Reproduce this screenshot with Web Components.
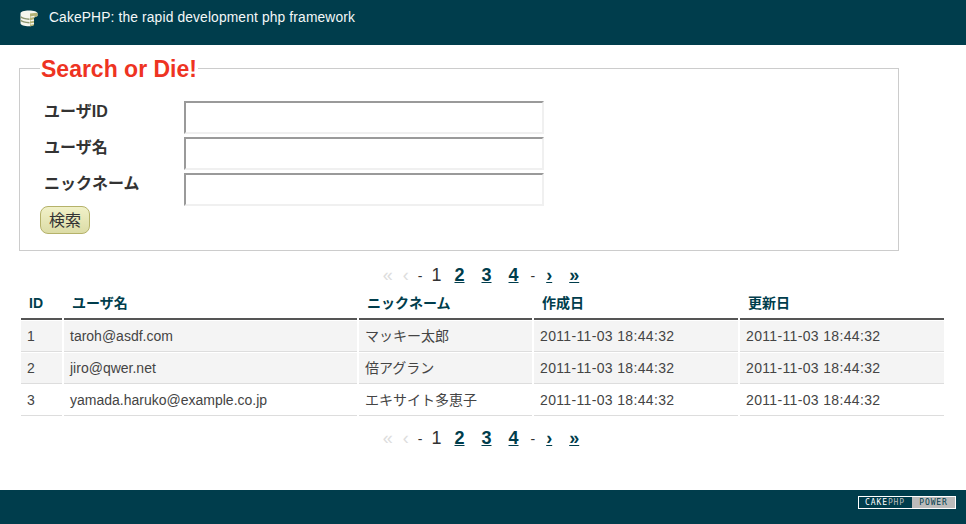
<!DOCTYPE html>
<html lang="ja">
<head>
<meta charset="utf-8">
<title>CakePHP</title>
<style>
  html, body { margin: 0; padding: 0; background: #fff; }
  body { font-family: "Liberation Sans", "Noto Sans CJK JP", sans-serif; font-size: 14px; color: #333; }
</style>
</head>
<body>
<cake-page>
  <cake-header slot="header">CakePHP: the rapid development php framework</cake-header>
  <search-box>Search or Die!</search-box>
  <pager-links></pager-links>
  <user-table></user-table>
  <pager-links class="bottom"></pager-links>
  <cake-footer slot="footer"></cake-footer>
</cake-page>

<script>
  /////////////////////////////////////////////////////////
  // Page frame: header, content, footer
  /////////////////////////////////////////////////////////
  class CakePage extends HTMLElement {
    constructor() {
      super();
      this.attachShadow({ mode: 'open' });
      this.shadowRoot.innerHTML = `
        <style>
          :host { display: flex; flex-direction: column; height: 524px; overflow: hidden; }
          main { flex: 1; padding: 23px 21px 0 19px; display: flex; flex-direction: column; }
        </style>
        <slot name="header"></slot>
        <main><slot></slot></main>
        <slot name="footer"></slot>
      `;
    }
  }
  customElements.define('cake-page', CakePage);

  class CakeHeader extends HTMLElement {
    constructor() {
      super();
      this.attachShadow({ mode: 'open' });
      this.shadowRoot.innerHTML = `
        <style>
          :host { display: flex; align-items: flex-start; gap: 11px; height: 45px; box-sizing: border-box;
            padding: 9px 0 0 20px; background: #003d4c; color: #f4f8f8; font-size: 13.8px; line-height: 17px; }
          svg { display: block; margin-top: 1px; }
          span { letter-spacing: 0.14px; }
        </style>
        <svg width="18" height="17" viewBox="0 0 18 17">
          <path d="M0.500 3.500C0.500 1.600 4 .5 9 .5s8.500 1.100 8.500 3v2.500L14 7.500v7.300c-1.300.9-3 1.500-5 1.500-4.500 0-8.500-1.200-8.500-3z" fill="#f6f6ee"/>
          <path d="M10 3.600L17.500 2.800V6L14 7.800V15.200C12.800 15.900 11.500 16.200 10 16.300z" fill="#b4b274"/>
          <path d="M10.500 7.200L14.500 6.400M10.500 10.800L14 10M10.500 14L14 13.300" stroke="#f6f6ee" stroke-width="1.300" fill="none"/>
          <path d="M.5 6.800C2 8.300 5 9 9.500 9.200M.5 10.300C2 11.800 5 12.500 9.500 12.700" stroke="#8d9670" stroke-width="1.500" fill="none"/>
        </svg>
        <span><slot></slot></span>
      `;
    }
  }
  customElements.define('cake-header', CakeHeader);

  /////////////////////////////////////////////////////////
  // One label + input row of the search form
  /////////////////////////////////////////////////////////
  class FormRow extends HTMLElement {
    constructor() {
      super();
      this.attachShadow({ mode: 'open' });
      this.shadowRoot.innerHTML = `
        <style>
          :host { display: flex; height: 36px; }
          label { width: 140px; padding-left: 4px;
            font-size: 16px; line-height: 22px; font-weight: bold; color: #333; }
          .box { width: 360px; height: 33px; box-sizing: border-box; background: #fff;
            border: 2px solid #f0f0f0; border-top-color: #9a9a9a; border-left-color: #9a9a9a; }
        </style>
        <label><slot></slot></label>
        <div class="box" role="textbox"></div>
      `;
    }
  }
  customElements.define('form-row', FormRow);

  class SearchBox extends HTMLElement {
    constructor() {
      super();
      this.attachShadow({ mode: 'open' });
      this.shadowRoot.innerHTML = `
        <style>
          :host { display: block; height: 183px; box-sizing: border-box; border: 1px solid #ccc;
            position: relative; width: 880px; }
          h2 { position: absolute; left: 20px; top: -13px; margin: 0; padding: 0 1px; background: #fff;
            font-size: 23px; line-height: 26px; font-weight: bold; color: #e32; }
          .rows { padding: 32px 0 0 20px; }
          button { display: block; width: 50px; height: 28px; margin-top: -3px; padding: 0 0 2px; font: inherit; font-size: 16px;
            color: #333; border: 1px solid #b5b26a; border-radius: 8px;
            background: linear-gradient(#f1f1c8, #dcdca6); }
        </style>
        <h2><slot></slot></h2>
        <div class="rows">
          <form-row>ユーザID</form-row>
          <form-row>ユーザ名</form-row>
          <form-row>ニックネーム</form-row>
          <button type="button">検索</button>
        </div>
      `;
    }
  }
  customElements.define('search-box', SearchBox);

  /////////////////////////////////////////////////////////
  // Paging links
  /////////////////////////////////////////////////////////
  class PagerLinks extends HTMLElement {
    constructor() {
      super();
      this.attachShadow({ mode: 'open' });
      this.shadowRoot.innerHTML = `
        <style>
          :host { display: flex; justify-content: center; align-items: baseline; height: 20px;
            margin: 14px 0 0 0; width: 924px; font-size: 18px; line-height: 20px; color: #333; }
          :host(.bottom) { margin-top: 11px; }
          a { color: #003d4c; font-weight: bold; text-decoration: underline; }
          .off { color: #ddd; }
          .sep { font-size: 14px; }
        </style>
        <span class="off">«</span>
        <span class="off" style="margin-left:10px">‹</span>
        <span class="sep" style="margin-left:9px">-</span>
        <span style="margin-left:9px">1</span>
        <a style="margin-left:13px">2</a>
        <a style="margin-left:17px">3</a>
        <a style="margin-left:17px">4</a>
        <span class="sep" style="margin-left:12px">-</span>
        <a style="margin-left:11px">›</a>
        <a style="margin-left:17px">»</a>
      `;
    }
  }
  customElements.define('pager-links', PagerLinks);

  /////////////////////////////////////////////////////////
  // Result table
  /////////////////////////////////////////////////////////
  const USERS = [
    ['1', 'taroh@asdf.com', 'マッキー太郎', '2011-11-03 18:44:32', '2011-11-03 18:44:32'],
    ['2', 'jiro@qwer.net', '倍アグラン', '2011-11-03 18:44:32', '2011-11-03 18:44:32'],
    ['3', 'yamada.haruko@example.co.jp', 'エキサイト多恵子', '2011-11-03 18:44:32', '2011-11-03 18:44:32'],
  ];
  const HEADS = ['ID', 'ユーザ名', 'ニックネーム', '作成日', '更新日'];

  class UserTable extends HTMLElement {
    constructor() {
      super();
      this.attachShadow({ mode: 'open' });
      const heads = HEADS.map(h => `<th>${h}</th>`).join('');
      const rows = USERS.map(u => `<tr>${u.map(c => `<td>${c}</td>`).join('')}</tr>`).join('');
      this.shadowRoot.innerHTML = `
        <style>
          :host { display: block; width: 927px; }
          table { border-collapse: separate; border-spacing: 2px 1px; table-layout: fixed; width: 927px; margin-top: 1px; }
          th { height: 33px; padding: 0 8px; box-sizing: border-box; text-align: left; vertical-align: middle;
            font-size: 14px; line-height: 16px; color: #003d4c; border-bottom: 2px solid #555; }
          td { height: 31px; padding: 0 6px; box-sizing: border-box; font-size: 14px; line-height: 16px;
            color: #444; border-bottom: 1px solid #ddd; white-space: nowrap; }
          td:nth-child(n+4) { letter-spacing: 0.34px; }
          tr:nth-child(-n+2) td { background: #f4f4f4; }
        </style>
        <table>
          <colgroup><col style="width:41px"><col style="width:293px"><col style="width:173px"><col style="width:204px"><col style="width:204px"></colgroup>
          <thead><tr>${heads}</tr></thead>
          <tbody>${rows}</tbody>
        </table>
      `;
    }
  }
  customElements.define('user-table', UserTable);

  class CakeFooter extends HTMLElement {
    constructor() {
      super();
      this.attachShadow({ mode: 'open' });
      this.shadowRoot.innerHTML = `
        <style>
          :host { display: flex; justify-content: flex-end; height: 34px; box-sizing: border-box;
            padding: 6px 10px 0 0; background: #003d4c; }
          .badge { display: flex; width: 98px; height: 13px; box-sizing: border-box; border: 1px solid #fff;
            font-family: "DejaVu Sans Mono", monospace; font-size: 8px; line-height: 11px; letter-spacing: 0.9px; }
          .a { width: 47px; padding-left: 6px; color: #fff; background: #003d4c; }
          .a i { font-style: normal; color: #bbb; }
          .b { flex: 1; text-align: center; background: #bbb; color: #003d4c; }
        </style>
        <div class="badge"><span class="a">CAKE<i>PHP</i></span><span class="b">POWER</span></div>
      `;
    }
  }
  customElements.define('cake-footer', CakeFooter);
</script>
</body>
</html>
